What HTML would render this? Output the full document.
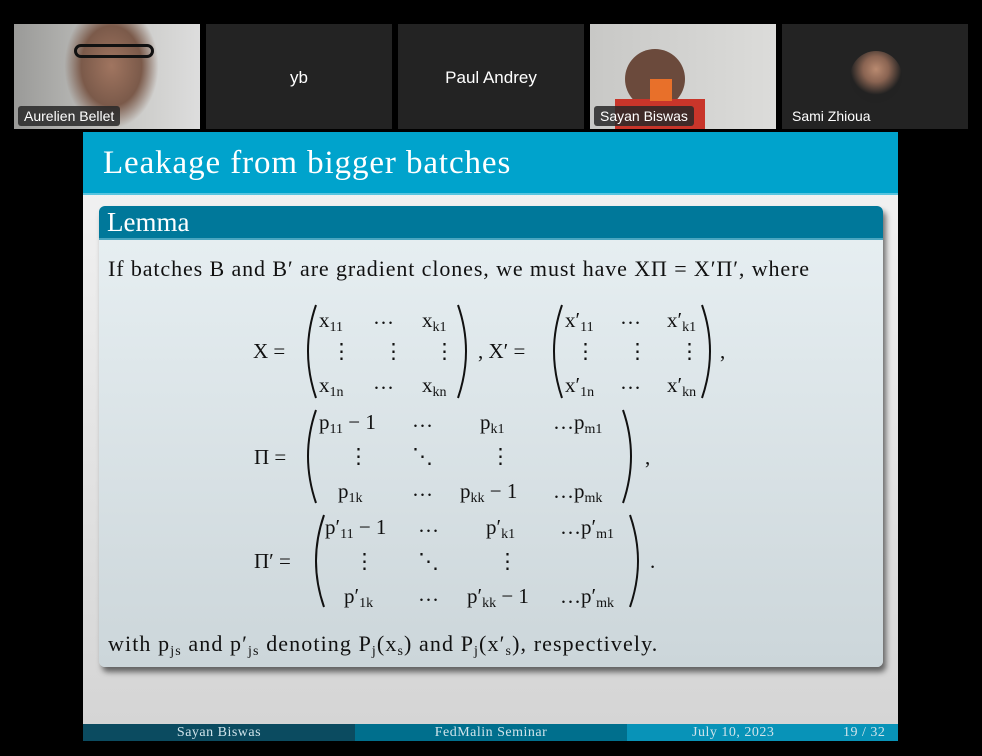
<!DOCTYPE html>
<html><head><meta charset="utf-8"><style>
body{margin:0;width:982px;height:756px;background:#000;position:relative;overflow:hidden;font-family:"Liberation Serif",serif}
.t{position:absolute;background:#232323;top:24px;width:186px;height:105px;overflow:hidden}
.n{position:absolute;color:#fff;font-family:"Liberation Sans",sans-serif;font-size:14px;left:4px;bottom:3px;background:rgba(40,40,40,.85);padding:2px 6px;border-radius:3px}
.c{position:absolute;color:#fff;font-family:"Liberation Sans",sans-serif;font-size:17px;width:100%;text-align:center;top:44px}
.a{position:absolute;font-size:21px;color:#111;white-space:nowrap;line-height:1}
.a sub{font-size:14px;vertical-align:-4px}
.a sup{font-size:14px}
svg.p{position:absolute}
.f{position:absolute;top:592px;color:#cfe3ea;font-size:14px;line-height:17px;letter-spacing:.5px}
</style></head><body>
<div class="t" style="left:14px;background:linear-gradient(90deg,#9a9a98,#c9c9c6 60%,#ddd)">
<div style="position:absolute;left:50px;top:0;width:95px;height:105px;background:radial-gradient(ellipse at 50% 40%,#a07560 0,#7b5a4a 45%,transparent 70%)"></div>
<div style="position:absolute;left:60px;top:20px;width:80px;height:14px;border:3px solid #111;border-radius:8px;box-sizing:border-box"></div>
<div class="n">Aurelien Bellet</div></div>
<div class="t" style="left:206px"><div class="c">yb</div></div>
<div class="t" style="left:398px"><div class="c">Paul Andrey</div></div>
<div class="t" style="left:590px;background:linear-gradient(90deg,#c8c8c6,#dcdcda)">
<div style="position:absolute;left:35px;top:25px;width:60px;height:60px;border-radius:50%;background:#6b4a3c"></div>
<div style="position:absolute;left:25px;top:75px;width:90px;height:40px;background:#c8352a"></div>
<div style="position:absolute;left:60px;top:55px;width:22px;height:22px;background:#e8702a"></div>
<div class="n">Sayan Biswas</div></div>
<div class="t" style="left:782px"><div style="position:absolute;left:68px;top:27px;width:52px;height:52px;border-radius:50%;background:radial-gradient(circle at 50% 35%,#b98a70 0,#8a6452 30%,#222 60%)"></div><div class="n" style="background:none">Sami Zhioua</div></div>

<div style="position:absolute;left:83px;top:132px;width:815px;height:609px;background:linear-gradient(#f4f4f4,#d4d4d4)">
<div style="position:absolute;left:0;top:0;width:815px;height:61px;background:#00a3cc;border-bottom:2px solid #58c4df"></div>
<div style="position:absolute;left:20px;top:15px;color:#fff;font-size:33px;line-height:1;letter-spacing:.9px">Leakage from bigger batches</div>
<div style="position:absolute;left:16px;top:74px;width:784px;height:461px;border-radius:6px;background:linear-gradient(#e8f0f3,#ccd6da);box-shadow:3px 5px 6px rgba(0,0,0,.55);overflow:hidden">
<div style="height:32px;background:#00789a;color:#fff;font-size:27px;line-height:32px;padding-left:8px;border-bottom:2px solid #4aa6c0">Lemma</div>
</div>
<div style="position:absolute;left:0;top:592px;width:272px;height:17px;background:#0b4b60"></div>
<div style="position:absolute;left:272px;top:592px;width:272px;height:17px;background:#006f8d"></div>
<div style="position:absolute;left:544px;top:592px;width:271px;height:17px;background:#0893b8"></div>
<div class="f" style="left:0;width:272px;text-align:center">Sayan Biswas</div>
<div class="f" style="left:272px;width:272px;text-align:center">FedMalin Seminar</div>
<div class="f" style="left:609px">July 10, 2023</div>
<div class="f" style="left:760px">19 / 32</div>
</div>

<div class="a" style="left:108px;top:258px;font-size:22px;letter-spacing:.9px">If batches B and B′ are gradient clones, we must have XΠ = X′Π′, where</div>

<div class="a" style="left:253px;top:341px">X =</div>
<div class="a" style="left:319px;top:310px">x<sub>11</sub></div><div class="a" style="left:373px;top:307px">…</div><div class="a" style="left:422px;top:310px">x<sub>k1</sub></div>
<div class="a" style="left:331px;top:341px">⋮</div><div class="a" style="left:383px;top:341px">⋮</div><div class="a" style="left:434px;top:341px">⋮</div>
<div class="a" style="left:319px;top:375px">x<sub>1n</sub></div><div class="a" style="left:373px;top:372px">…</div><div class="a" style="left:422px;top:375px">x<sub>kn</sub></div>
<div class="a" style="left:478px;top:341px">, X′ =</div>
<div class="a" style="left:565px;top:310px">x′<sub>11</sub></div><div class="a" style="left:620px;top:307px">…</div><div class="a" style="left:667px;top:310px">x′<sub>k1</sub></div>
<div class="a" style="left:575px;top:341px">⋮</div><div class="a" style="left:627px;top:341px">⋮</div><div class="a" style="left:679px;top:341px">⋮</div>
<div class="a" style="left:565px;top:375px">x′<sub>1n</sub></div><div class="a" style="left:620px;top:372px">…</div><div class="a" style="left:667px;top:375px">x′<sub>kn</sub></div>
<div class="a" style="left:720px;top:341px">,</div>

<div class="a" style="left:254px;top:447px">Π =</div>
<div class="a" style="left:319px;top:412px">p<sub>11</sub> − 1</div><div class="a" style="left:412px;top:410px">…</div><div class="a" style="left:480px;top:412px">p<sub>k1</sub></div><div class="a" style="left:553px;top:412px">…p<sub>m1</sub></div>
<div class="a" style="left:348px;top:446px">⋮</div><div class="a" style="left:412px;top:446px">⋱</div><div class="a" style="left:490px;top:446px">⋮</div>
<div class="a" style="left:338px;top:481px">p<sub>1k</sub></div><div class="a" style="left:412px;top:479px">…</div><div class="a" style="left:460px;top:481px">p<sub>kk</sub> − 1</div><div class="a" style="left:553px;top:481px">…p<sub>mk</sub></div>
<div class="a" style="left:645px;top:447px">,</div>

<div class="a" style="left:254px;top:551px">Π′ =</div>
<div class="a" style="left:325px;top:517px">p′<sub>11</sub> − 1</div><div class="a" style="left:418px;top:515px">…</div><div class="a" style="left:486px;top:517px">p′<sub>k1</sub></div><div class="a" style="left:560px;top:517px">…p′<sub>m1</sub></div>
<div class="a" style="left:354px;top:551px">⋮</div><div class="a" style="left:418px;top:551px">⋱</div><div class="a" style="left:497px;top:551px">⋮</div>
<div class="a" style="left:344px;top:586px">p′<sub>1k</sub></div><div class="a" style="left:418px;top:584px">…</div><div class="a" style="left:467px;top:586px">p′<sub>kk</sub> − 1</div><div class="a" style="left:560px;top:586px">…p′<sub>mk</sub></div>
<div class="a" style="left:650px;top:551px">.</div>

<svg class="p" width="982" height="756" style="left:0;top:0" fill="none" stroke="#111" stroke-width="2">
<path d="M316 305 Q300 351 316 398"/><path d="M458 305 Q474 351 458 398"/>
<path d="M562 305 Q546 351 562 398"/><path d="M702 305 Q718 351 702 398"/>
<path d="M316 410 Q300 456 316 503"/><path d="M623 410 Q639 456 623 503"/>
<path d="M324 515 Q308 561 324 607"/><path d="M630 515 Q646 561 630 607"/>
</svg>

<div class="a" style="left:108px;top:633px;font-size:22px;letter-spacing:1.1px">with p<sub>js</sub> and p′<sub>js</sub> denoting P<sub>j</sub>(x<sub>s</sub>) and P<sub>j</sub>(x′<sub>s</sub>), respectively.</div>
</body></html>
